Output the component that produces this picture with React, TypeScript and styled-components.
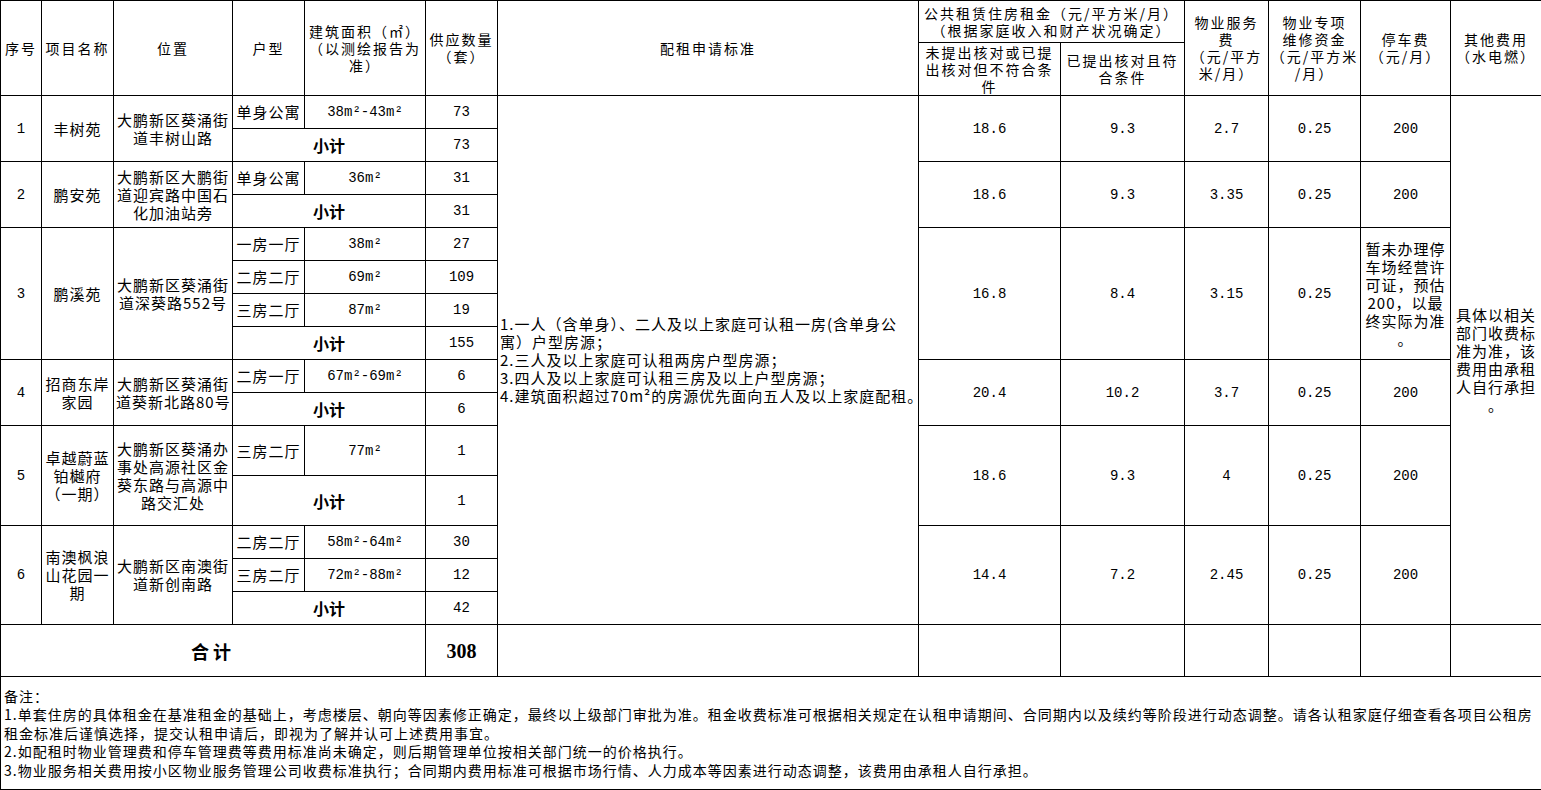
import React from 'react';
import styled, { createGlobalStyle } from 'styled-components';

const GlobalStyle = createGlobalStyle`
  html, body {
    margin: 0;
    padding: 0;
    background: #fff;
  }
  body {
    font-family: "Noto Sans CJK SC", "Noto Sans", sans-serif;
    color: #000;
  }
`;

const Sheet = styled.table`
  width: 1541px;
  border-collapse: collapse;
  table-layout: fixed;
`;

const Row = styled.tr<{ $h: number }>`
  height: ${({ $h }) => $h}px;
`;

const HeadCell = styled.th`
  border: 1px solid #000;
  padding: 0 1px;
  font-weight: 400;
  font-size: 14px;
  letter-spacing: 2px;
  line-height: 17px;
  text-align: center;
  vertical-align: middle;
  white-space: nowrap;
`;

const Cell = styled.td<{ $left?: boolean }>`
  border: 1px solid #000;
  padding: 0 2px;
  font-size: 15px;
  letter-spacing: 1px;
  line-height: 18px;
  text-align: ${({ $left }) => ($left ? 'left' : 'center')};
  vertical-align: middle;
  white-space: nowrap;
`;

const NumCell = styled(Cell)`
  font-family: "Liberation Mono", monospace;
  font-size: 14px;
  letter-spacing: 0;
`;

const SubtotalCell = styled(Cell)`
  font-size: 16px;
  font-weight: 700;
  letter-spacing: 0;
`;

const TotalLabel = styled(Cell)`
  font-size: 18px;
  font-weight: 700;
  letter-spacing: 4px;
`;

const TotalValue = styled(Cell)`
  font-family: "Liberation Serif", serif;
  font-size: 20px;
  font-weight: 700;
  letter-spacing: 0;
`;

const NoteCell = styled.td`
  border: 1px solid #000;
  padding: 0 3px;
  vertical-align: middle;
`;

const NoteLine = styled.div`
  font-size: 14px;
  letter-spacing: 1px;
  line-height: 18.5px;
  white-space: nowrap;
`;

type Unit = { type: string; area: string; qty: number };

type Project = {
  no: number;
  name: string[];
  addr: string[];
  units: Unit[];
  subtotal: number;
  rentA: string;
  rentB: string;
  service: string;
  repair: string;
  parking: string[];
  h: number;
};

const projects: Project[] = [
  {
    no: 1, name: ['丰树苑'], addr: ['大鹏新区葵涌街', '道丰树山路'],
    units: [{ type: '单身公寓', area: '38m²-43m²', qty: 73 }],
    subtotal: 73, rentA: '18.6', rentB: '9.3', service: '2.7', repair: '0.25', parking: ['200'], h: 33,
  },
  {
    no: 2, name: ['鹏安苑'], addr: ['大鹏新区大鹏街', '道迎宾路中国石', '化加油站旁'],
    units: [{ type: '单身公寓', area: '36m²', qty: 31 }],
    subtotal: 31, rentA: '18.6', rentB: '9.3', service: '3.35', repair: '0.25', parking: ['200'], h: 33,
  },
  {
    no: 3, name: ['鹏溪苑'], addr: ['大鹏新区葵涌街', '道深葵路552号'],
    units: [
      { type: '一房一厅', area: '38m²', qty: 27 },
      { type: '二房二厅', area: '69m²', qty: 109 },
      { type: '三房二厅', area: '87m²', qty: 19 },
    ],
    subtotal: 155, rentA: '16.8', rentB: '8.4', service: '3.15', repair: '0.25',
    parking: ['暂未办理停', '车场经营许', '可证，预估', '200，以最', '终实际为准', '。'], h: 33,
  },
  {
    no: 4, name: ['招商东岸', '家园'], addr: ['大鹏新区葵涌街', '道葵新北路80号'],
    units: [{ type: '二房一厅', area: '67m²-69m²', qty: 6 }],
    subtotal: 6, rentA: '20.4', rentB: '10.2', service: '3.7', repair: '0.25', parking: ['200'], h: 33,
  },
  {
    no: 5, name: ['卓越蔚蓝', '铂樾府', '（一期）'], addr: ['大鹏新区葵涌办', '事处高源社区金', '葵东路与高源中', '路交汇处'],
    units: [{ type: '三房二厅', area: '77m²', qty: 1 }],
    subtotal: 1, rentA: '18.6', rentB: '9.3', service: '4', repair: '0.25', parking: ['200'], h: 50,
  },
  {
    no: 6, name: ['南澳枫浪', '山花园一', '期'], addr: ['大鹏新区南澳街', '道新创南路'],
    units: [
      { type: '二房二厅', area: '58m²-64m²', qty: 30 },
      { type: '三房二厅', area: '72m²-88m²', qty: 12 },
    ],
    subtotal: 42, rentA: '14.4', rentB: '7.2', service: '2.45', repair: '0.25', parking: ['200'], h: 33,
  },
];

const criteria = [
  '1.一人（含单身）、二人及以上家庭可认租一房(含单身公',
  '寓）户型房源；',
  '2.三人及以上家庭可认租两房户型房源；',
  '3.四人及以上家庭可认租三房及以上户型房源；',
  '4.建筑面积超过70m²的房源优先面向五人及以上家庭配租。',
];

const otherFees = ['具体以相关', '部门收费标', '准为准，该', '费用由承租', '人自行承担', '。'];

const notes = [
  '备注：',
  '1.单套住房的具体租金在基准租金的基础上，考虑楼层、朝向等因素修正确定，最终以上级部门审批为准。租金收费标准可根据相关规定在认租申请期间、合同期内以及续约等阶段进行动态调整。请各认租家庭仔细查看各项目公租房',
  '租金标准后谨慎选择，提交认租申请后，即视为了解并认可上述费用事宜。',
  '2.如配租时物业管理费和停车管理费等费用标准尚未确定，则后期管理单位按相关部门统一的价格执行。',
  '3.物业服务相关费用按小区物业服务管理公司收费标准执行；合同期内费用标准可根据市场行情、人力成本等因素进行动态调整，该费用由承租人自行承担。',
];

const colWidths = [41, 72, 119, 72, 121, 72, 421, 142, 124, 84, 92, 90, 91];

const dataRowCount = projects.reduce((n, p) => n + p.units.length + 1, 0);

const Lines: React.FC<{ lines: string[] }> = ({ lines }) => (
  <>
    {lines.map((l, i) => (
      <React.Fragment key={i}>
        {i > 0 && <br />}
        {l}
      </React.Fragment>
    ))}
  </>
);

const ProjectRows: React.FC<{ p: Project; first: boolean }> = ({ p, first }) => {
  const span = p.units.length + 1;
  const parkingIsText = p.parking.length > 1;
  return (
    <>
      {p.units.map((u, i) => (
        <Row $h={p.h} key={i}>
          {i === 0 && (
            <>
              <NumCell rowSpan={span}>{p.no}</NumCell>
              <Cell rowSpan={span}><Lines lines={p.name} /></Cell>
              <Cell rowSpan={span}><Lines lines={p.addr} /></Cell>
            </>
          )}
          <Cell>{u.type}</Cell>
          <NumCell>{u.area}</NumCell>
          <NumCell>{u.qty}</NumCell>
          {i === 0 && (
            <>
              {first && (
                <Cell $left rowSpan={dataRowCount}><Lines lines={criteria} /></Cell>
              )}
              <NumCell rowSpan={span}>{p.rentA}</NumCell>
              <NumCell rowSpan={span}>{p.rentB}</NumCell>
              <NumCell rowSpan={span}>{p.service}</NumCell>
              <NumCell rowSpan={span}>{p.repair}</NumCell>
              {parkingIsText ? (
                <Cell rowSpan={span}><Lines lines={p.parking} /></Cell>
              ) : (
                <NumCell rowSpan={span}>{p.parking[0]}</NumCell>
              )}
              {first && (
                <Cell rowSpan={dataRowCount}><Lines lines={otherFees} /></Cell>
              )}
            </>
          )}
        </Row>
      ))}
      <Row $h={p.h}>
        <SubtotalCell colSpan={2}>小计</SubtotalCell>
        <NumCell>{p.subtotal}</NumCell>
      </Row>
    </>
  );
};

const App: React.FC = () => {
  const total = projects.reduce((n, p) => n + p.subtotal, 0);
  return (
    <>
      <GlobalStyle />
      <Sheet>
        <colgroup>
          {colWidths.map((w, i) => (
            <col key={i} style={{ width: w }} />
          ))}
        </colgroup>
        <thead>
          <Row $h={42}>
            <HeadCell rowSpan={2}>序号</HeadCell>
            <HeadCell rowSpan={2}>项目名称</HeadCell>
            <HeadCell rowSpan={2}>位置</HeadCell>
            <HeadCell rowSpan={2}>户型</HeadCell>
            <HeadCell rowSpan={2}><Lines lines={['建筑面积（㎡）', '（以测绘报告为', '准）']} /></HeadCell>
            <HeadCell rowSpan={2}><Lines lines={['供应数量', '（套）']} /></HeadCell>
            <HeadCell rowSpan={2}>配租申请标准</HeadCell>
            <HeadCell colSpan={2}><Lines lines={['公共租赁住房租金（元/平方米/月）', '（根据家庭收入和财产状况确定）']} /></HeadCell>
            <HeadCell rowSpan={2}><Lines lines={['物业服务', '费', '（元/平方', '米/月）']} /></HeadCell>
            <HeadCell rowSpan={2}><Lines lines={['物业专项', '维修资金', '（元/平方米', '/月）']} /></HeadCell>
            <HeadCell rowSpan={2}><Lines lines={['停车费', '（元/月）']} /></HeadCell>
            <HeadCell rowSpan={2}><Lines lines={['其他费用', '（水电燃）']} /></HeadCell>
          </Row>
          <Row $h={53}>
            <HeadCell><Lines lines={['未提出核对或已提', '出核对但不符合条', '件']} /></HeadCell>
            <HeadCell><Lines lines={['已提出核对且符', '合条件']} /></HeadCell>
          </Row>
        </thead>
        <tbody>
          {projects.map((p, i) => (
            <ProjectRows p={p} first={i === 0} key={p.no} />
          ))}
          <Row $h={52}>
            <TotalLabel colSpan={5}>合计</TotalLabel>
            <TotalValue>{total}</TotalValue>
            <Cell />
            <Cell />
            <Cell />
            <Cell />
            <Cell />
            <Cell />
            <Cell />
          </Row>
          <Row $h={113}>
            <NoteCell colSpan={13}>
              {notes.map((n, i) => (
                <NoteLine key={i}>{n}</NoteLine>
              ))}
            </NoteCell>
          </Row>
        </tbody>
      </Sheet>
    </>
  );
};

export default App;
